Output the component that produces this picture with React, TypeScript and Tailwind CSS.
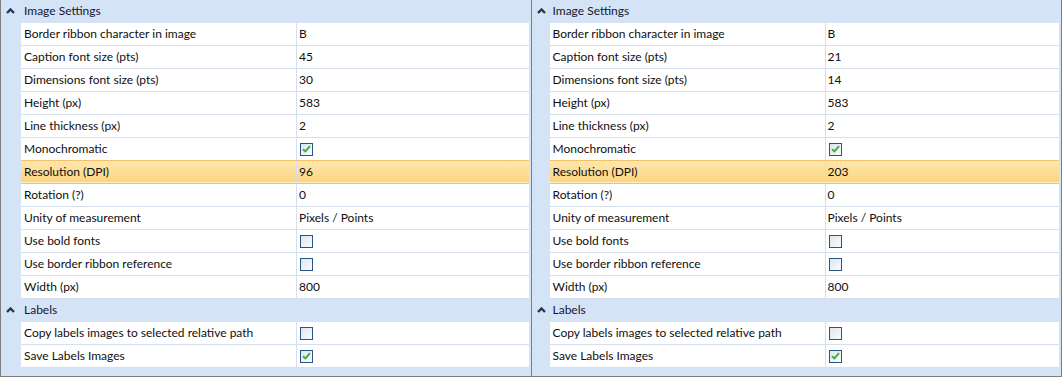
import React from "react";

type Row = { name: string; value?: string; check?: boolean; selected?: boolean };
type Group = { title: string; rows: Row[] };

const font = { fontFamily: 'Lato, "Noto Sans", sans-serif' };

function groupsFor(caption: string, dims: string, dpi: string): Group[] {
  return [
    {
      title: "Image Settings",
      rows: [
        { name: "Border ribbon character in image", value: "B" },
        { name: "Caption font size (pts)", value: caption },
        { name: "Dimensions font size (pts)", value: dims },
        { name: "Height (px)", value: "583" },
        { name: "Line thickness (px)", value: "2" },
        { name: "Monochromatic", check: true },
        { name: "Resolution (DPI)", value: dpi, selected: true },
        { name: "Rotation (?)", value: "0" },
        { name: "Unity of measurement", value: "Pixels / Points" },
        { name: "Use bold fonts", check: false },
        { name: "Use border ribbon reference", check: false },
        { name: "Width (px)", value: "800" },
      ],
    },
    {
      title: "Labels",
      rows: [
        { name: "Copy labels images to selected relative path", check: false },
        { name: "Save Labels Images", check: true },
      ],
    },
  ];
}

function Checkbox({ checked }: { checked: boolean }) {
  return (
    <div className="ml-px w-[13px] h-[13px] border border-[#2c5386] bg-gradient-to-br from-[#dde5ee] to-[#fbfcfd] flex items-center justify-center">
      {checked && (
        <svg width="9" height="8" viewBox="0 0 9 8">
          <path d="M1 4.2 L3.4 6.4 L8 1.2" fill="none" stroke="#3fae3f" strokeWidth="2" />
        </svg>
      )}
    </div>
  );
}

function Chevron() {
  return (
    <svg width="9" height="6" viewBox="0 0 9 6" className="ml-[5px]">
      <path d="M1 5 L4.5 1.5 L8 5" fill="none" stroke="#1e395b" strokeWidth="2.4" />
    </svg>
  );
}

function PropRow({ row }: { row: Row }) {
  const bg = row.selected
    ? "bg-gradient-to-b from-[#fee7ad] to-[#fcd47e] border-t border-t-[#f5c065] shadow-[inset_0_-1px_0_#fff0c4]"
    : "bg-white";
  const sel = row.selected ? "h-[23px] -mt-px" : "";
  return (
    <div className={`flex h-[23px] border-b ${row.selected ? "border-b-[#f5c065]" : "border-b-[#d5dfee]"}`}>
      <div className={`w-[276px] flex items-center pl-[3px] border-r border-r-[#d5dfee] ${bg} ${sel}`}>
        {row.name}
      </div>
      <div className={`flex-1 flex items-center pl-[2px] ${bg} ${sel}`}>
        {row.check === undefined ? row.value : <Checkbox checked={row.check} />}
      </div>
    </div>
  );
}

function Panel({ groups, left }: { groups: Group[]; left: boolean }) {
  return (
    <div className={`flex-1 flex flex-col bg-[#d5e3f7] ${left ? "" : "border-l border-l-[#7e7e7e]"}`}>
      {groups.map((g) => (
        <div key={g.title} className="flex flex-col">
          <div className="h-[23px] flex items-center border-b border-b-[#d5e3f7]">
            <div className={`${left ? "w-[20px]" : "w-[18px]"} flex items-center`}>
              <Chevron />
            </div>
            <span className="pl-[3px] text-[#15152e]">{g.title}</span>
          </div>
          <div className={`flex flex-col ${left ? "ml-[20px]" : "ml-[18px]"} mr-[2px]`}>
            {g.rows.map((r) => (
              <PropRow key={r.name} row={r} />
            ))}
          </div>
        </div>
      ))}
    </div>
  );
}

export default function App() {
  return (
    <div
      className="w-[1062px] h-[377px] flex border-l border-r border-b border-[#7e7e7e] text-[12px] text-[#0f0f0f] overflow-hidden"
      style={font}
    >
      <Panel groups={groupsFor("45", "30", "96")} left />
      <Panel groups={groupsFor("21", "14", "203")} left={false} />
    </div>
  );
}
